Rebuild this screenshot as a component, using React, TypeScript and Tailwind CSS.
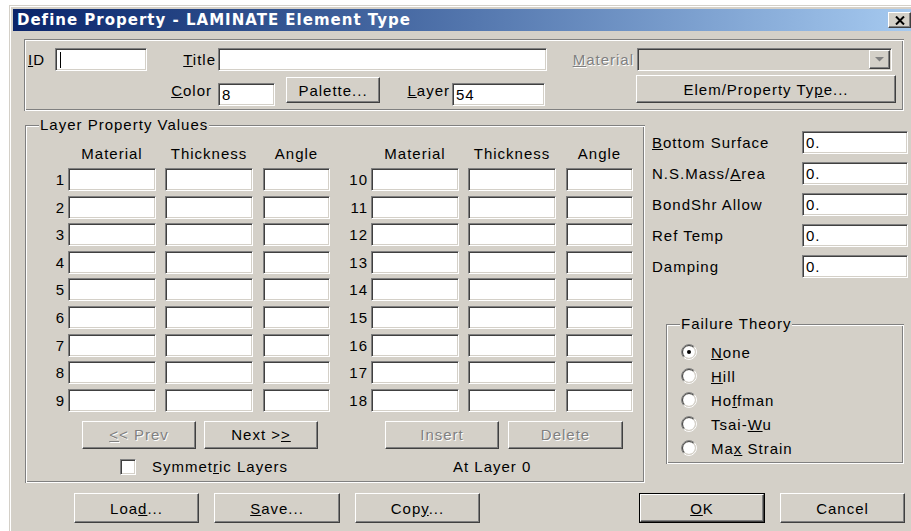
import type { ReactNode } from "react";

// classic 3D edges
const sunken =
  "border border-t-[#808080] border-l-[#808080] border-b-white border-r-white shadow-[inset_1px_1px_0_#404040,inset_-1px_-1px_0_#d4d0c8]";
const raised =
  "border border-t-white border-l-white border-b-[#404040] border-r-[#404040] shadow-[inset_-1px_-1px_0_#808080]";
const etched =
  "shadow-[inset_1px_1px_0_#808080,inset_-1px_-1px_0_#fff,inset_2px_2px_0_#fff,inset_-2px_-2px_0_#808080]";
const grayed = "text-[#808080] [text-shadow:1px_1px_0_#fff]";

const Edit = ({ className = "", value, caret }: { className?: string; value?: string; caret?: boolean }) => (
  <div className={`flex h-[23px] items-center bg-white pl-[3px] ${sunken} ${className}`}>
    {caret && <span className="ml-[1px] h-[16px] w-px bg-black" />}
    {value}
  </div>
);

const Button = ({
  className = "",
  children,
  disabled,
  isDefault,
}: {
  className?: string;
  children: ReactNode;
  disabled?: boolean;
  isDefault?: boolean;
}) => {
  const face = (
    <div className={`flex h-full w-full items-center justify-center ${raised} ${disabled ? grayed : ""}`}>
      {children}
    </div>
  );
  if (isDefault) return <div className={`border border-black ${className}`}>{face}</div>;
  return <div className={className}>{face}</div>;
};

const GroupBox = ({ title, className = "", children }: { title?: string; className?: string; children?: ReactNode }) => (
  <div className={`relative ${etched} ${className}`}>
    {title && (
      <span className="absolute left-[14px] top-[-9px] bg-[#d4d0c8] px-[1px] leading-[17px]">{title}</span>
    )}
    {children}
  </div>
);

const Radio = ({ checked }: { checked?: boolean }) => (
  <svg width="16" height="16" viewBox="0 0 16 16">
    <circle cx="8" cy="8" r="6" fill="#fff" />
    <path d="M2.697 13.303A7.5 7.5 0 0 1 13.303 2.697" fill="none" stroke="#808080" />
    <path d="M13.303 2.697A7.5 7.5 0 0 1 2.697 13.303" fill="none" stroke="#fff" />
    <path d="M3.404 12.596A6.5 6.5 0 0 1 12.596 3.404" fill="none" stroke="#404040" />
    <path d="M12.596 3.404A6.5 6.5 0 0 1 3.404 12.596" fill="none" stroke="#d4d0c8" />
    {checked && <circle cx="8" cy="8" r="2" fill="#000" />}
  </svg>
);

const LayerRow = ({ left, right }: { left: number; right: number }) => (
  <div className="flex h-[23px] items-center">
    <span className="w-[43px] pr-[3px] text-right">{left}</span>
    <Edit className="w-[88px]" />
    <Edit className="ml-[9px] w-[88px]" />
    <Edit className="ml-[10px] w-[67px]" />
    <span className="w-[41px] pr-[3px] text-right">{right}</span>
    <Edit className="w-[88px]" />
    <Edit className="ml-[9px] w-[88px]" />
    <Edit className="ml-[10px] w-[67px]" />
  </div>
);

const props = [
  { label: <><u>B</u>ottom Surface</> },
  { label: <>N.S.Mass/<u>A</u>rea</> },
  { label: <>BondShr Allow</> },
  { label: <>Ref Temp</> },
  { label: <>Damping</> },
];

const theories = [
  { label: <><u>N</u>one</>, checked: true },
  { label: <><u>H</u>ill</> },
  { label: <>Ho<u>f</u>fman</> },
  { label: <>Tsai-<u>W</u>u</> },
  { label: <>Ma<u>x</u> Strain</> },
];

export default function App() {
  return (
    <div className="h-[531px] w-[911px] overflow-hidden bg-white pl-[9px] pt-[5px] font-['Liberation_Sans',Arial,sans-serif] text-[15px] leading-[17px] tracking-[1px] text-black [text-underline-offset:1px]">
      <div className="h-[560px] w-[907px] bg-[#d4d0c8] pl-[4px] pt-[4px] shadow-[inset_1px_1px_0_#d4d0c8,inset_2px_2px_0_#fff]">
        {/* title bar */}
        <div className="flex h-[22px] w-[899px] items-center justify-between bg-linear-to-r from-[#0a246a] to-[#a6caf0] pl-[4px] pr-[1px]">
          <span className="font-['DejaVu_Sans',sans-serif] text-[15px] font-bold tracking-[1px] text-white">
            Define Property - LAMINATE Element Type
          </span>
          <div className={`flex h-[16px] w-[23px] items-center justify-center bg-[#d4d0c8] ${raised}`}>
            <svg width="10" height="9" viewBox="0 0 10 9">
              <path d="M1 0.5L9 8.5M9 0.5L1 8.5" stroke="#000" strokeWidth="2" />
            </svg>
          </div>
        </div>

        <div className="pl-[11px] pt-[8px]">
          {/* header group */}
          <GroupBox className="h-[72px] w-[880px]">
            <div className="flex items-center pt-[9px]">
              <span className="w-[31px] pl-[4px]">
                <u>I</u>D
              </span>
              <Edit className="w-[92px]" caret />
              <span className="w-[71px] pr-[2px] text-right">
                <u>T</u>itle
              </span>
              <Edit className="w-[329px]" />
              <span className={`w-[90px] pr-[3px] text-right ${grayed}`}>
                <u>M</u>aterial
              </span>
              <div className={`flex h-[23px] w-[255px] justify-end bg-[#d4d0c8] p-px ${sunken}`}>
                <div className={`flex h-full w-[21px] items-center justify-center ${raised}`}>
                  <svg width="9" height="5" viewBox="0 0 9 5">
                    <path d="M0 0h9L4.5 4.5z" fill="#808080" />
                  </svg>
                </div>
              </div>
            </div>
            <div className="mt-[4px] flex items-start">
              <span className="mt-[7px] w-[194px] pr-[6px] text-right">
                <u>C</u>olor
              </span>
              <Edit className="mt-[8px] w-[57px]" value="8" />
              <Button className="ml-[11px] mt-[2px] h-[26px] w-[94px]">Palette...</Button>
              <span className="mt-[7px] w-[72px] pr-[2px] text-right">
                <u>L</u>ayer
              </span>
              <Edit className="mt-[8px] w-[93px]" value="54" />
              <Button className="ml-[91px] h-[28px] w-[260px]">
                <span>
                  Elem/Property Ty<u>p</u>e...
                </span>
              </Button>
            </div>
          </GroupBox>

          <div className="mt-[14px] flex items-start">
            {/* layer table */}
            <GroupBox title="Layer Property Values" className="ml-[1px] h-[358px] w-[620px]">
              <div className="flex flex-col pt-[20px]">
                <div className="flex h-[17px]">
                  <span className="w-[43px]" />
                  <span className="w-[88px] text-center">Material</span>
                  <span className="ml-[9px] w-[88px] text-center">Thickness</span>
                  <span className="ml-[10px] w-[67px] text-center">Angle</span>
                  <span className="w-[41px]" />
                  <span className="w-[88px] text-center">Material</span>
                  <span className="ml-[9px] w-[88px] text-center">Thickness</span>
                  <span className="ml-[10px] w-[67px] text-center">Angle</span>
                </div>
                <div className="mt-[6px] flex flex-col gap-[4.6px]">
                  {[1, 2, 3, 4, 5, 6, 7, 8, 9].map((n) => (
                    <LayerRow key={n} left={n} right={n + 9} />
                  ))}
                </div>
                <div className="mt-[9px] flex h-[28px]">
                  <Button className="ml-[57px] w-[114px]" disabled>
                    <span>
                      <u>&lt;</u>&lt; Prev
                    </span>
                  </Button>
                  <Button className="ml-[8px] w-[114px]">
                    <span>
                      Next &gt;<u>&gt;</u>
                    </span>
                  </Button>
                  <Button className="ml-[67px] w-[114px]" disabled>
                    Insert
                  </Button>
                  <Button className="ml-[9px] w-[115px]" disabled>
                    Delete
                  </Button>
                </div>
                <div className="mt-[10px] flex h-[16px] items-center">
                  <div className={`ml-[95px] h-[16px] w-[16px] bg-white ${sunken}`} />
                  <span className="ml-[16px] w-[301px]">
                    Symmet<u>r</u>ic Layers
                  </span>
                  <span>At Layer 0</span>
                </div>
              </div>
            </GroupBox>

            {/* property values and failure theory */}
            <div className="ml-[7px] flex flex-col">
              <div className="mt-[6px] flex flex-col gap-[8px]">
                {props.map((p, i) => (
                  <div key={i} className="flex h-[23px] items-center">
                    <span className="w-[150px]">{p.label}</span>
                    <Edit className="w-[106px]" value="0." />
                  </div>
                ))}
              </div>
              <GroupBox title="Failure Theory" className="ml-[14px] mt-[46px] h-[140px] w-[238px]">
                <div className="flex flex-col pt-[16px]">
                  {theories.map((t, i) => (
                    <div key={i} className="flex h-[24px] items-center pl-[15px]">
                      <Radio checked={t.checked} />
                      <span className="ml-[14px]">{t.label}</span>
                    </div>
                  ))}
                </div>
              </GroupBox>
            </div>
          </div>

          {/* dialog buttons */}
          <div className="mt-[10px] flex h-[30px]">
            <Button className="ml-[50px] w-[125px]">
              <span>
                Loa<u>d</u>...
              </span>
            </Button>
            <Button className="ml-[15px] w-[126px]">
              <span>
                <u>S</u>ave...
              </span>
            </Button>
            <Button className="ml-[15px] w-[125px]">
              <span>
                Cop<u>y</u>...
              </span>
            </Button>
            <Button className="ml-[159px] w-[126px]" isDefault>
              <span>
                <u>O</u>K
              </span>
            </Button>
            <Button className="ml-[15px] w-[125px]">Cancel</Button>
          </div>
        </div>
      </div>
    </div>
  );
}
